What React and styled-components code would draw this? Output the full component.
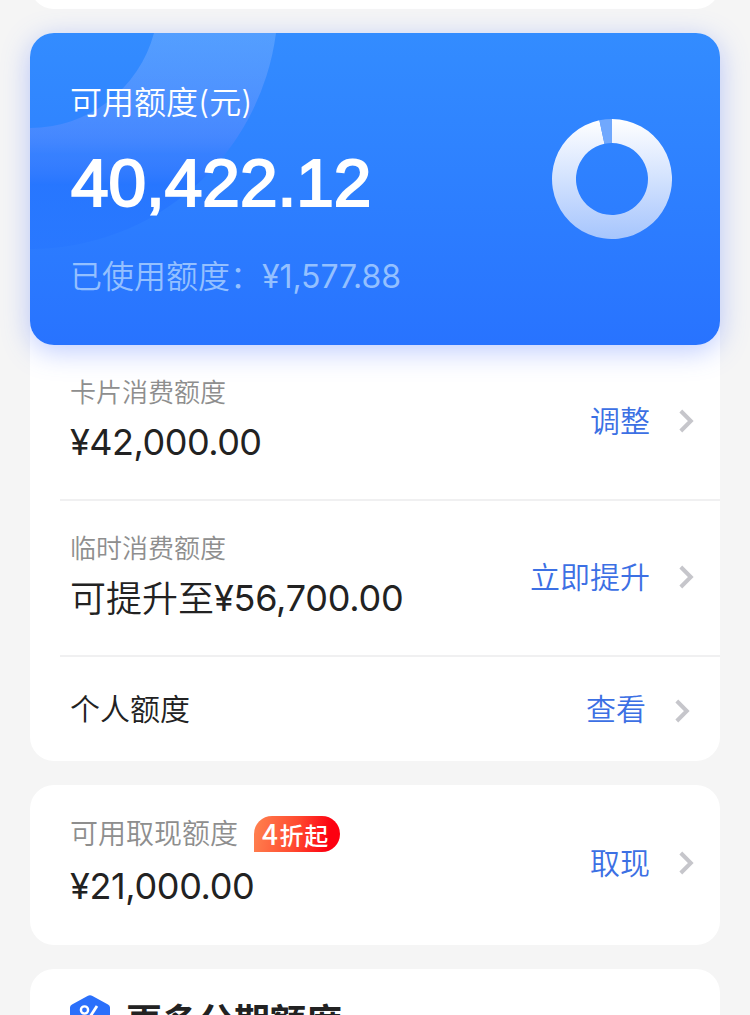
import styled, { createGlobalStyle } from 'styled-components'

const GlobalStyle = createGlobalStyle`
  * {
    box-sizing: border-box;
  }

  body {
    margin: 0;
    background: #f5f5f5;
    color: #222;
    font-family: Inter, "Noto Sans CJK SC", sans-serif;
    font-weight: 350;
  }
`

const Page = styled.main`
  display: flex;
  flex-direction: column;
  gap: 24px;
  width: 750px;
  height: 1015px;
  padding: 0 30px;
  overflow: hidden;
`

const Panel = styled.section`
  flex: none;
  height: ${(props) => props.$height}px;
  background: #fff;
  border-radius: 24px;
`

// bottom edge of the scrolled-away panel
const TopPanel = styled(Panel)`
  margin-top: -51px;
`

const Hero = styled.div`
  position: relative;
  display: flex;
  justify-content: space-between;
  height: 312px;
  padding: 0 48px 0 40px;
  border-radius: 24px;
  background: linear-gradient(#338cff, #2873ff);
  box-shadow: 0 6px 28px rgba(72, 110, 255, 0.36);
  color: #fff;
`

const HeroArc = styled.svg`
  position: absolute;
  left: 0;
  top: 0;
  border-radius: 24px 0 0 0;
`

const HeroText = styled.div`
  position: relative;
  padding-top: 46px;
`

const HeroTitle = styled.div`
  font-size: 32px;
  line-height: 48px;
`

const HeroAmount = styled.div`
  margin-top: 18px;
  padding-left: 1px;
  font-family: "Liberation Sans", sans-serif;
  font-size: 67.5px;
  font-weight: 400;
  line-height: 76px;
  -webkit-text-stroke: 2.2px #fff;
`

const HeroUsed = styled.div`
  display: flex;
  margin-top: 32px;
  font-size: 32px;
  line-height: 48px;
  color: #94c0ff;
`

const UsedValue = styled.span`
  font-weight: 400;
  letter-spacing: -0.1px;
`

const Ring = styled.svg`
  margin-top: 86px;
`

const Row = styled.div`
  display: flex;
  align-items: center;
  justify-content: space-between;
  height: ${(props) => props.$height}px;
  margin-left: ${(props) => (props.$flush ? 0 : 30)}px;
  padding: 0 ${(props) => props.$right || 26}px 0 ${(props) => (props.$flush ? 40 : 10)}px;
  border-bottom: ${(props) => (props.$divider ? '2px solid #f0f0f1' : 'none')};
`

const RowText = styled.div`
  display: flex;
  flex-direction: column;
`

const Label = styled.div`
  display: flex;
  align-items: center;
  height: 42px;
  font-size: ${(props) => props.$size || 26}px;
  line-height: 42px;
  color: #8e8e8e;
`

const Amount = styled.div`
  margin: ${(props) => props.$gap || 1}px 0 3px;
  font-size: 36px;
  font-weight: 400;
  line-height: 54px;
  letter-spacing: ${(props) => props.$spacing ?? -0.5}px;
`

const Prefix = styled.span`
  position: relative;
  top: 1px;
  font-weight: 350;
  letter-spacing: 0;
`

const Name = styled.div`
  font-size: 30px;
  line-height: 44px;
`

const Action = styled.div`
  display: flex;
  align-items: center;
  gap: 29px;
  padding-bottom: ${(props) => props.$lift || 0}px;
  font-size: 30px;
  line-height: 44px;
  color: #3c70e4;
`

const Arrow = styled.svg`
  margin-top: ${(props) => props.$drop || 0}px;
`

const Badge = styled.span`
  width: 86px;
  height: 36px;
  margin-left: 16px;
  padding-left: 8px;
  border-radius: 18px 18px 18px 0;
  background: linear-gradient(100deg, #ff7d4d 5%, #ff4b30 48%, #fd0010 86%);
  font-family: "Noto Sans CJK SC", sans-serif;
  font-size: 24px;
  font-weight: 500;
  line-height: 34px;
  letter-spacing: 0.6px;
  color: #fff;
  white-space: nowrap;
`

const BadgeDigit = styled.span`
  margin-right: 1px;
  font-size: 28px;
  line-height: 34px;
`

const CashText = styled(RowText)`
  padding-top: 2px;
`

const SectionHead = styled.div`
  display: flex;
  gap: 16px;
  padding: 26px 40px 0;
`

const SectionTitle = styled.h2`
  margin: 4px 0 0;
  font-size: 36px;
  font-weight: 700;
  line-height: 46px;
`

function Chevron({ drop }) {
  return (
    <Arrow $drop={drop} width="15" height="24" viewBox="0 0 15 24" fill="none">
      <path d="M1.8 2L11.8 12L1.8 22" stroke="#c6c6cb" strokeWidth="4" />
    </Arrow>
  )
}

function PercentIcon() {
  return (
    <svg width="40" height="44" viewBox="0 0 40 44" fill="none">
      <path d="M17.5 .9Q20 -.5 22.5 .9L38 9.5Q40 10.500 40 12.500V32Q40 34 38 35L22.500 43Q20 44.400 17.500 43L2 35Q0 34 0 32V12.500Q0 10.500 2 9.500Z" fill="#2b70fb" />
      <circle cx="14.500" cy="15" r="3.600" stroke="#fff" strokeWidth="2.400" />
      <circle cx="25.500" cy="27" r="3.600" stroke="#fff" strokeWidth="2.400" />
      <path d="M27 11L14 31" stroke="#fff" strokeWidth="2.800" />
    </svg>
  )
}

function LimitRing() {
  return (
    <Ring width="120" height="120" viewBox="0 0 120 120" fill="none">
      <defs>
        <linearGradient id="ring" x1="0" y1="0" x2="0" y2="120" gradientUnits="userSpaceOnUse">
          <stop stopColor="#fff" />
          <stop offset="1" stopColor="#a6c5fd" />
        </linearGradient>
      </defs>
      <path d="M60 0A60 60 0 1 1 47.400 1.340L52.440 24.800A36 36 0 1 0 60 24Z" fill="url(#ring)" />
      <path d="M47.400 1.340A60 60 0 0 1 60 0V24A36 36 0 0 0 52.440 24.800Z" fill="#70a8fd" />
    </Ring>
  )
}

function App() {
  return (
    <>
      <GlobalStyle />
      <Page>
        <TopPanel $height={60} />
        <Panel $height={728}>
          <Hero>
            <HeroArc width="260" height="230" viewBox="0 0 260 230" fill="none">
              <defs>
                <linearGradient id="arc" x1="0" y1="0" x2="0" y2="216" gradientUnits="userSpaceOnUse">
                  <stop stopColor="#fff" stopOpacity=".16" />
                  <stop offset=".25" stopColor="#d8ccff" stopOpacity=".18" />
                  <stop offset=".46" stopColor="#a49cff" stopOpacity=".2" />
                  <stop offset=".56" stopColor="#4a7cff" stopOpacity=".3" />
                  <stop offset=".7" stopColor="#2472ff" stopOpacity=".7" />
                  <stop offset="1" stopColor="#2675ff" stopOpacity=".5" />
                </linearGradient>
              </defs>
              <path
                d="M124 0A128 128 0 0 1 0 95V216A248 248 0 0 0 246 0Z"
                fill="url(#arc)"
              />
            </HeroArc>
            <HeroText>
              <HeroTitle>可用额度(元)</HeroTitle>
              <HeroAmount>40,422.12</HeroAmount>
              <HeroUsed>
                已使用额度：<UsedValue>¥1,577.88</UsedValue>
              </HeroUsed>
            </HeroText>
            <LimitRing />
          </Hero>
          <Row $height={156} $divider>
            <RowText>
              <Label>卡片消费额度</Label>
              <Amount>¥42,000.00</Amount>
            </RowText>
            <Action $lift={2}>调整<Chevron /></Action>
          </Row>
          <Row $height={156} $divider>
            <RowText>
              <Label>临时消费额度</Label>
              <Amount $spacing={-0.25}><Prefix>可提升至</Prefix>¥56,700.00</Amount>
            </RowText>
            <Action $lift={2}>立即提升<Chevron /></Action>
          </Row>
          <Row $height={104} $right={30}>
            <Name>个人额度</Name>
            <Action>查看<Chevron drop={4} /></Action>
          </Row>
        </Panel>
        <Panel $height={160}>
          <Row $height={156} $flush>
            <CashText>
              <Label $size={28}>
                可用取现额度
                <Badge><BadgeDigit>4</BadgeDigit>折起</Badge>
              </Label>
              <Amount $gap={4} $spacing={-0.35}>¥21,000.00</Amount>
            </CashText>
            <Action>取现<Chevron /></Action>
          </Row>
        </Panel>
        <Panel $height={160}>
          <SectionHead>
            <PercentIcon />
            <SectionTitle>更多分期额度</SectionTitle>
          </SectionHead>
        </Panel>
      </Page>
    </>
  )
}

export default App
